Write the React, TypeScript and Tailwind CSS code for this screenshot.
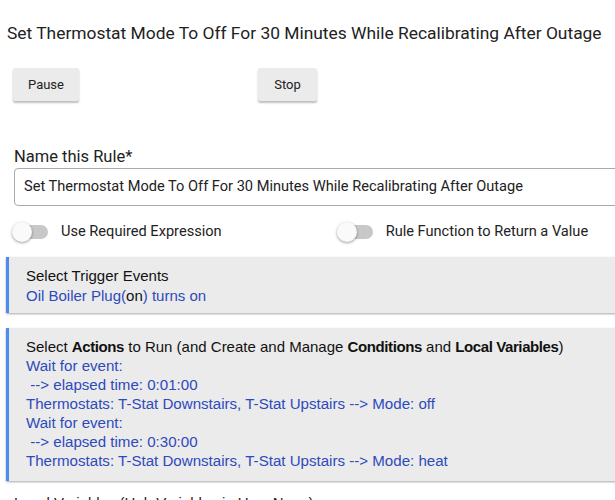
import React from "react";

function Toggle() {
  return (
    <div className="relative w-[36px] h-[16px] flex items-center">
      <div className="absolute left-[4px] w-[32px] h-[14px] rounded-full bg-[#c8c8c8]" />
      <div className="absolute left-0 w-[20px] h-[20px] rounded-full bg-[#fafafa] shadow-[0_1px_3px_rgba(0,0,0,0.4)]" />
    </div>
  );
}

export default function App() {
  const roboto = { fontFamily: "Roboto, sans-serif" };
  const sys = { fontFamily: "'Liberation Sans', Arial, sans-serif" };
  return (
    <div className="w-[615px] h-[500px] overflow-hidden bg-white text-[#222]" style={roboto}>
      <div className="pl-[7px] pt-[22px] text-[17.4px] leading-[22px] text-[#222] whitespace-nowrap">
        Set Thermostat Mode To Off For 30 Minutes While Recalibrating After Outage
      </div>
      <div className="flex mt-[24px] pl-[13px]">
        <button className="w-[66px] h-[33px] bg-[#ebebeb] text-[13px] text-[#222] rounded-[2px] shadow-[0_2px_2px_rgba(0,0,0,0.25)]">
          Pause
        </button>
        <button className="ml-[179px] w-[59px] h-[33px] bg-[#ebebeb] text-[13px] text-[#222] rounded-[2px] shadow-[0_2px_2px_rgba(0,0,0,0.25)]">
          Stop
        </button>
      </div>
      <div className="pl-[14px] mt-[46px] text-[16.5px] leading-[20px] text-[#222]">Name this Rule*</div>
      <div className="ml-[14px] mt-[1px] h-[38px] w-[620px] border border-[#aaa] rounded-[4px] flex items-center pl-[9px] text-[14.6px] text-[#222] whitespace-nowrap">
        Set Thermostat Mode To Off For 30 Minutes While Recalibrating After Outage
      </div>
      <div className="flex items-center mt-[16px] h-[20px] pl-[12px] text-[14.6px] text-[#222]">
        <Toggle />
        <span className="ml-[13px]">Use Required Expression</span>
        <div className="ml-[115px]">
          <Toggle />
        </div>
        <span className="ml-[13px]">Rule Function to Return a Value</span>
      </div>
      <div
        className="ml-[6px] mt-[15px] w-[620px] h-[56px] bg-[#ebebeb] border-l-[3px] border-[#4a8cf0] shadow-[0_1px_2px_rgba(0,0,0,0.35)] pl-[17px] pt-[9px] text-[15px] leading-[20px]"
        style={sys}
      >
        <div className="text-[#111]">Select Trigger Events</div>
        <div className="text-[#2d4abb]">
          Oil Boiler Plug(<span className="text-[#111]">on</span>) turns on
        </div>
      </div>
      <div
        className="ml-[6px] mt-[15px] w-[620px] h-[153px] bg-[#ebebeb] border-l-[3px] border-[#4a8cf0] shadow-[0_1px_2px_rgba(0,0,0,0.35)] pl-[17px] pt-[9px] text-[15px] leading-[19px]"
        style={sys}
      >
        <div className="text-[#111] whitespace-nowrap">
          Select <b className="tracking-[-0.4px]">Actions</b> to Run (and Create and Manage{" "}
          <b className="tracking-[-0.4px]">Conditions</b> and <b className="tracking-[-0.4px]">Local Variables</b>)
        </div>
        <div className="text-[#2d4abb] whitespace-pre text-[15.1px]">
          <div>Wait for event:</div>
          <div> --&gt; elapsed time: 0:01:00</div>
          <div>Thermostats: T-Stat Downstairs, T-Stat Upstairs --&gt; Mode: off</div>
          <div>Wait for event:</div>
          <div> --&gt; elapsed time: 0:30:00</div>
          <div>Thermostats: T-Stat Downstairs, T-Stat Upstairs --&gt; Mode: heat</div>
        </div>
      </div>
      <div className="pl-[14px] mt-[12px] text-[15px] leading-[20px] text-[#222]" style={sys}>
        Local Variables (Hub Variables in Use: None)
      </div>
    </div>
  );
}
